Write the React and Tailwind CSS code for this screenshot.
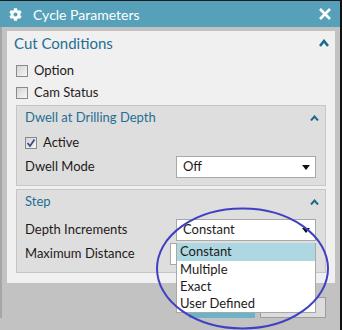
import React from "react";
import { FaCog } from "react-icons/fa";

const font = "font-['Lato',sans-serif]";

function Caret({ big }) {
  return big ? (
    <svg width="10" height="8" viewBox="0 0 10 8">
      <path d="M1 7 L5 2 L9 7" fill="none" stroke="#1b6a8c" strokeWidth="2.6" />
    </svg>
  ) : (
    <svg width="9" height="6" viewBox="0 0 9 6">
      <path d="M1 5.5 L4.5 1.5 L8 5.5" fill="none" stroke="#1b6a8c" strokeWidth="2" />
    </svg>
  );
}

function CheckBox({ checked }) {
  return (
    <div className="w-[12px] h-[12px] border border-[#8a8a8a] bg-linear-to-br from-[#d4d4d4] to-[#f6f6f6] flex items-center justify-center shrink-0">
      {checked && (
        <svg width="10" height="10" viewBox="0 0 10 10">
          <path d="M1.5 5 L4 8 L8.5 1.5" fill="none" stroke="#3b4c8c" strokeWidth="1.8" />
        </svg>
      )}
    </div>
  );
}

function Arrow() {
  return (
    <svg width="8" height="5" viewBox="0 0 8 5">
      <path d="M0 0 H8 L4 5 Z" fill="#111" />
    </svg>
  );
}

function Select({ value }) {
  return (
    <div className="w-[140px] h-[22px] bg-white border border-[#a8a8a8] flex items-center justify-between pl-[6px] pr-[5px]">
      <span>{value}</span>
      <Arrow />
    </div>
  );
}

function Section({ title, children }) {
  return (
    <div className="mx-[9px] bg-[#dedede] border border-[#c6c6c6]">
      <div className="h-[23px] flex items-center justify-between pl-[8px] pr-[6px] text-[#1f6f93]">
        <span>{title}</span>
        <Caret />
      </div>
      {children}
    </div>
  );
}

export default function App() {
  const options = ["Constant", "Multiple", "Exact", "User Defined"];

  return (
    <div className={`w-[342px] h-[330px] relative overflow-hidden bg-[#c2c2c2] border-t border-r-2 border-t-[#1c1c1c] border-r-[#111] text-[13px] text-[#1e1a1a] ${font}`}>
      {/* Title bar */}
      <div className="h-[26px] bg-[#56a1b9] flex items-center pl-[9px] pr-[9px] text-white">
        <FaCog size={13} />
        <span className="ml-[11px] text-[14px]">Cycle Parameters</span>
        <svg className="ml-auto" width="12" height="12" viewBox="0 0 12 12">
          <path d="M1 1 L11 11 M11 1 L1 11" stroke="white" strokeWidth="2.6" />
        </svg>
      </div>

      <div className="border-l-2 border-[#a6a6a6] pl-[5px] pr-[5px] pt-[4px]">
        <div className="bg-[#f0f0f0] h-[252px] flex flex-col">
          <div className="h-[24px] flex items-center justify-between pl-[7px] pr-[6px] text-[15px] text-[#1f6f93]">
            <span>Cut Conditions</span>
            <Caret big />
          </div>
          <div className="mt-[5px] h-[22px] flex items-center gap-[6px] pl-[9px]">
            <CheckBox />
            <span>Option</span>
          </div>
          <div className="h-[22px] flex items-center gap-[6px] pl-[9px]">
            <CheckBox />
            <span>Cam Status</span>
          </div>

          <div className="mt-[1px]">
            <Section title="Dwell at Drilling Depth">
              <div className="mt-[3px] h-[22px] flex items-center gap-[6px] pl-[8px]">
                <CheckBox checked />
                <span>Active</span>
              </div>
              <div className="mt-[2px] mb-[7px] flex items-center justify-between pl-[8px] pr-[9px]">
                <span>Dwell Mode</span>
                <Select value="Off" />
              </div>
            </Section>
          </div>

          <div className="mt-[3px]">
            <Section title="Step">
              <div className="mt-[6px] flex items-center justify-between pl-[8px] pr-[9px]">
                <span>Depth Increments</span>
                <Select value="Constant" />
              </div>
              <div className="mt-[2px] mb-[7px] flex items-center pl-[8px] pr-[9px]">
                <span>Maximum Distance</span>
                <div className="ml-auto w-[146px] h-[22px] bg-white border border-[#a8a8a8]" />
              </div>
            </Section>
          </div>
        </div>

        {/* Buttons */}
        <div className="flex justify-end gap-[5px] pt-[14px] pr-[9px]">
          <div className="w-[66px] h-[21px] bg-[#6cb3c7]" />
          <div className="w-[66px] h-[21px] bg-[#dcdcdc] border border-[#9c9c9c]" />
        </div>
      </div>

      {/* Open dropdown list */}
      <div className="absolute left-[176px] top-[242px] w-[140px] bg-white border border-[#a8a8a8] border-t-0">
        {options.map((o, i) => (
          <div
            key={o}
            className={`flex items-center pl-[3px] ${i === 0 ? "h-[18px] bg-[#add7e1]" : "h-[17px]"}`}
          >
            {o}
          </div>
        ))}
      </div>

      {/* Annotation ellipse */}
      <svg className="absolute left-0 top-0 pointer-events-none" width="342" height="330">
        <ellipse cx="242.5" cy="267.5" rx="85.5" ry="60" fill="none" stroke="#3f40c2" strokeWidth="2" />
      </svg>
    </div>
  );
}
